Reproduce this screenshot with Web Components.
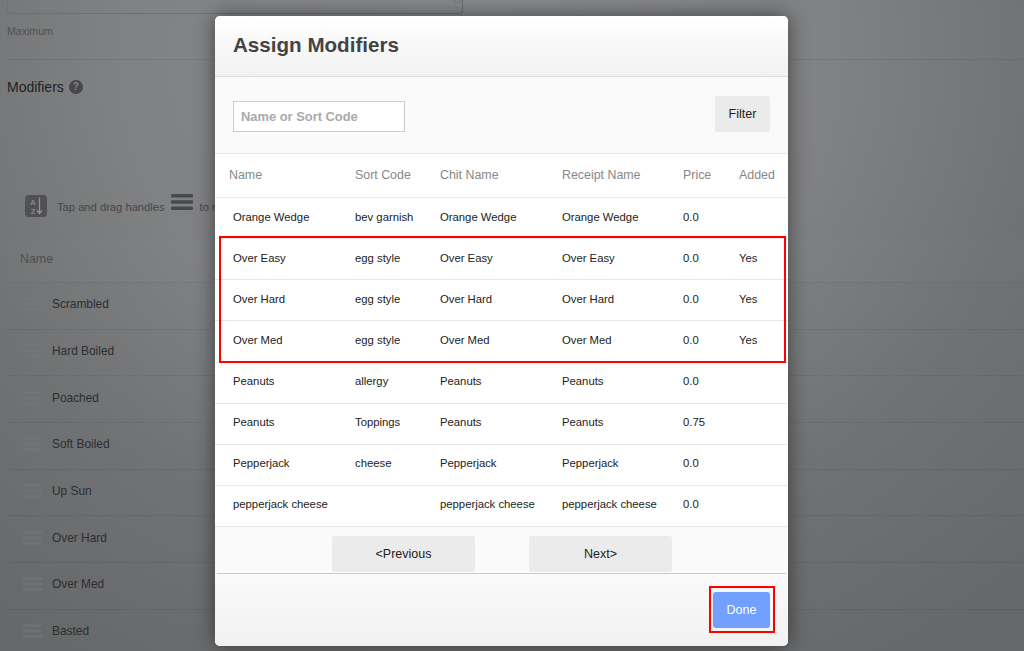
<!DOCTYPE html>
<html>
<head>
<meta charset="utf-8">
<title>Assign Modifiers</title>
<style>
html, body { margin: 0; height: 100%; }
body { font-family: "Liberation Sans", Arial, sans-serif; overflow: hidden; }
</style>
</head>
<body>
<menu-page>
    <back-row>Scrambled</back-row>
    <back-row>Hard Boiled</back-row>
    <back-row>Poached</back-row>
    <back-row>Soft Boiled</back-row>
    <back-row>Up Sun</back-row>
    <back-row>Over Hard</back-row>
    <back-row>Over Med</back-row>
    <back-row>Basted</back-row>
</menu-page>

<assign-modal>
    <modifier-row header name="Name" code="Sort Code" chit="Chit Name" receipt="Receipt Name" price="Price" added="Added"></modifier-row>
    <modifier-row name="Orange Wedge" code="bev garnish" chit="Orange Wedge" receipt="Orange Wedge" price="0.0"></modifier-row>
    <mark-box>
        <modifier-row name="Over Easy" code="egg style" chit="Over Easy" receipt="Over Easy" price="0.0" added="Yes"></modifier-row>
        <modifier-row name="Over Hard" code="egg style" chit="Over Hard" receipt="Over Hard" price="0.0" added="Yes"></modifier-row>
        <modifier-row name="Over Med" code="egg style" chit="Over Med" receipt="Over Med" price="0.0" added="Yes"></modifier-row>
    </mark-box>
    <modifier-row name="Peanuts" code="allergy" chit="Peanuts" receipt="Peanuts" price="0.0"></modifier-row>
    <modifier-row name="Peanuts" code="Toppings" chit="Peanuts" receipt="Peanuts" price="0.75"></modifier-row>
    <modifier-row name="Pepperjack" code="cheese" chit="Pepperjack" receipt="Pepperjack" price="0.0"></modifier-row>
    <modifier-row name="pepperjack cheese" code="" chit="pepperjack cheese" receipt="pepperjack cheese" price="0.0"></modifier-row>
</assign-modal>

<script>
const handleIcon = `<svg width="22" height="16" viewBox="0 0 22 16"><rect x="0" y="0" width="22" height="3.4" rx="1"/><rect x="0" y="6.3" width="22" height="3.4" rx="1"/><rect x="0" y="12.6" width="22" height="3.4" rx="1"/></svg>`;

// the dimmed page behind the modal
class MenuPage extends HTMLElement {
    constructor() {
        super();
        this.attachShadow({mode: 'open'});
        this.shadowRoot.innerHTML = `
<style>
:host {
    display: block;
    height: 651px;
    overflow: hidden;
    padding: 0 0 0 7px;
    box-sizing: border-box;
    font-family: "Liberation Sans", Arial, sans-serif;
    background: radial-gradient(ellipse 800px 700px at 480px 60px, #888a8c 0%, #808183 45%, #717274 70%, #676869 100%);
    color: #2b2c2e;
}
.top-field {
    position: relative;
    height: 14px;
    width: 456px;
    box-sizing: border-box;
    border: 1px solid #6f7072;
    border-top: none;
    border-radius: 0 0 4px 4px;
}
.top-field::after {
    content: "";
    position: absolute;
    right: 0;
    top: -6px;
    width: 7px;
    height: 7px;
    border: 1px solid #77787a;
    border-radius: 50%;
}
.max {
    font-size: 10.6px;
    color: #505153;
    line-height: 12px;
    margin-top: 11px;
    padding-bottom: 22px;
    border-bottom: 1px solid rgba(0,0,0,0.06);
}
.title {
    display: flex;
    align-items: center;
    gap: 5px;
    margin-top: 19px;
    font-size: 14px;
    line-height: 16px;
    color: #222;
}
.help {
    width: 14px;
    height: 14px;
    border-radius: 50%;
    background: #47484a;
    color: #85868a;
    font-size: 10px;
    font-weight: bold;
    line-height: 14px;
    text-align: center;
}
.hint {
    display: flex;
    align-items: center;
    margin: 100px 0 0 18px;
    height: 22px;
    font-size: 11.2px;
    color: #46474a;
}
.hint span:first-of-type { padding-top: 2px; }
.sort {
    width: 22px;
    height: 22px;
    margin-right: 10px;
    flex: none;
}
.grip {
    margin: -8px 7px 0 6px;
    fill: #48494b;
    height: 16px;
}
.to { white-space: nowrap; padding-top: 2px; }
.head {
    margin-top: 22px;
    height: 44px;
    box-sizing: border-box;
    padding: 12px 0 0 13px;
    font-size: 12.4px;
    line-height: 16px;
    color: #4e4f51;
    border-bottom: 1px solid rgba(0,0,0,0.06);
    background: rgba(255,255,255,0.012);
}
</style>
<div class="top-field"></div>
<div class="max">Maximum</div>
<div class="title">Modifiers <span class="help">?</span></div>
<div class="hint">
    <svg class="sort" viewBox="0 0 22 22">
        <rect width="22" height="22" rx="4" fill="#505153"/>
        <text x="8" y="10" font-family="Liberation Sans" font-size="7.5" font-weight="bold" text-anchor="middle" fill="#85868a">A</text>
        <text x="8" y="19" font-family="Liberation Sans" font-size="7.5" font-weight="bold" text-anchor="middle" fill="#85868a">Z</text>
        <path d="M14.5 2.5v16M12 15.5l2.5 3 2.5-3" fill="none" stroke="#8f9092" stroke-width="1.3"/>
    </svg>
    <span>Tap and drag handles</span>
    <span class="grip">${handleIcon}</span>
    <span class="to">to reorder</span>
</div>
<div class="head">Name</div>
<slot></slot>`;
    }
}

class BackRow extends HTMLElement {
    constructor() {
        super();
        this.attachShadow({mode: 'open'});
        this.shadowRoot.innerHTML = `
<style>
:host {
    display: flex;
    align-items: center;
    height: 46.7px;
    box-sizing: border-box;
    padding: 0 0 3px 15px;
    font-size: 11.9px;
    color: #2d2e30;
    border-bottom: 1px solid rgba(0,0,0,0.06);
}
svg { fill: #77787a; margin-right: 9px; width: 21px; height: 14px; opacity: .5; }
</style>
${handleIcon}<slot></slot>`;
    }
}

// modal with title, filter, table (slotted), pager and footer
class AssignModal extends HTMLElement {
    constructor() {
        super();
        this.attachShadow({mode: 'open'});
        this.shadowRoot.innerHTML = `
<style>
:host {
    display: flex;
    flex-direction: column;
    position: absolute;
    left: 215px;
    top: 16px;
    width: 573px;
    height: 630px;
    border-radius: 5px;
    overflow: hidden;
    background: #fff;
    font-family: "Liberation Sans", Arial, sans-serif;
    box-shadow: 0 0 20px rgba(0,0,0,0.5);
}
header {
    height: 61px;
    flex: none;
    box-sizing: border-box;
    border-bottom: 1px solid #ddd;
    padding: 17px 0 0 18px;
    background: linear-gradient(#fff, #f1f1f1);
    font-size: 20.6px;
    line-height: 24px;
    font-weight: bold;
    color: #444;
}
.filter {
    height: 77px;
    flex: none;
    box-sizing: border-box;
    padding: 19px 18px 0 18px;
    display: flex;
    justify-content: space-between;
    align-items: flex-start;
    background: #fafafa;
    border-bottom: 1px solid #e8e8e8;
}
input {
    width: 172px;
    height: 31px;
    margin: 5px 0 0 0;
    box-sizing: border-box;
    border: 1px solid #ccc;
    padding: 0 7px;
    background: #fff;
    font: bold 12.9px "Liberation Sans", Arial, sans-serif;
    outline: none;
}
input::placeholder { color: #aaa; opacity: 1; }
.btn {
    display: flex;
    align-items: center;
    justify-content: center;
    height: 36px;
    box-sizing: border-box;
    border-radius: 3px;
    background: #ebebeb;
    font-size: 12.5px;
    color: #222;
}
.filter .btn { width: 55px; }
.rows { flex: none; background: #fff; }
.pager {
    flex: none;
    height: 46px;
    box-sizing: border-box;
    padding: 9px 0 0 1px;
    display: flex;
    justify-content: center;
    gap: 54px;
    background: #fafafa;
}
.pager .btn { width: 143px; }
footer {
    flex: 1;
    position: relative;
    background: linear-gradient(#fafafa, #f1f1f1);
    display: flex;
    justify-content: flex-end;
    align-items: flex-start;
    padding: 19px 18px 0 0;
}
footer::before {
    content: "";
    position: absolute;
    left: 2px;
    right: 2px;
    top: 0;
    border-top: 1px solid #c9c9c9;
}
.done {
    width: 57px;
    background: #72a0fe;
    color: #fff;
    font-weight: 500;
    position: relative;
}
.done::after {
    content: "";
    position: absolute;
    left: -4px;
    top: -6px;
    right: -5px;
    bottom: -5px;
    border: 2px solid #f00;
}
</style>
<header>Assign Modifiers</header>
<div class="filter">
    <input type="text" placeholder="Name or Sort Code">
    <div class="btn">Filter</div>
</div>
<div class="rows"><slot></slot></div>
<div class="pager">
    <div class="btn">&lt;Previous</div>
    <div class="btn">Next&gt;</div>
</div>
<footer><div class="btn done">Done</div></footer>`;
    }
}

class ModifierRow extends HTMLElement {
    constructor() {
        super();
        this.attachShadow({mode: 'open'});
        const isHead = this.hasAttribute('header');
        const cols = ['name', 'code', 'chit', 'receipt', 'price', 'added'];
        const cells = cols.map(c => `<div class="${c}">${this.getAttribute(c) || ''}</div>`).join('');
        this.shadowRoot.innerHTML = `
<style>
:host {
    display: grid;
    grid-template-columns: 122px 85px 122px 121px 56px 1fr;
    align-items: center;
    box-sizing: border-box;
    height: ${isHead ? '44px' : '41.125px'};
    padding: 0 0 ${isHead ? '1px' : '3px'} 18px;
    font-size: ${isHead ? '12.4px' : '11.3px'};
    color: ${isHead ? '#888' : '#222'};
    border-bottom: 1px solid #e8e8e8;
    white-space: nowrap;
}
.name { margin-left: ${isHead ? '-4px' : '0'}; }
</style>
${cells}`;
    }
}

// red annotation drawn round a group of rows
class MarkBox extends HTMLElement {
    constructor() {
        super();
        this.attachShadow({mode: 'open'});
        this.shadowRoot.innerHTML = `
<style>
:host { display: block; position: relative; }
:host::after {
    content: "";
    position: absolute;
    left: 4px;
    right: 2px;
    top: -3px;
    bottom: 0;
    border: 2px solid #f00;
    pointer-events: none;
}
</style>
<slot></slot>`;
    }
}

window.customElements.define('menu-page', MenuPage);
window.customElements.define('back-row', BackRow);
window.customElements.define('assign-modal', AssignModal);
window.customElements.define('modifier-row', ModifierRow);
window.customElements.define('mark-box', MarkBox);
</script>
</body>
</html>
